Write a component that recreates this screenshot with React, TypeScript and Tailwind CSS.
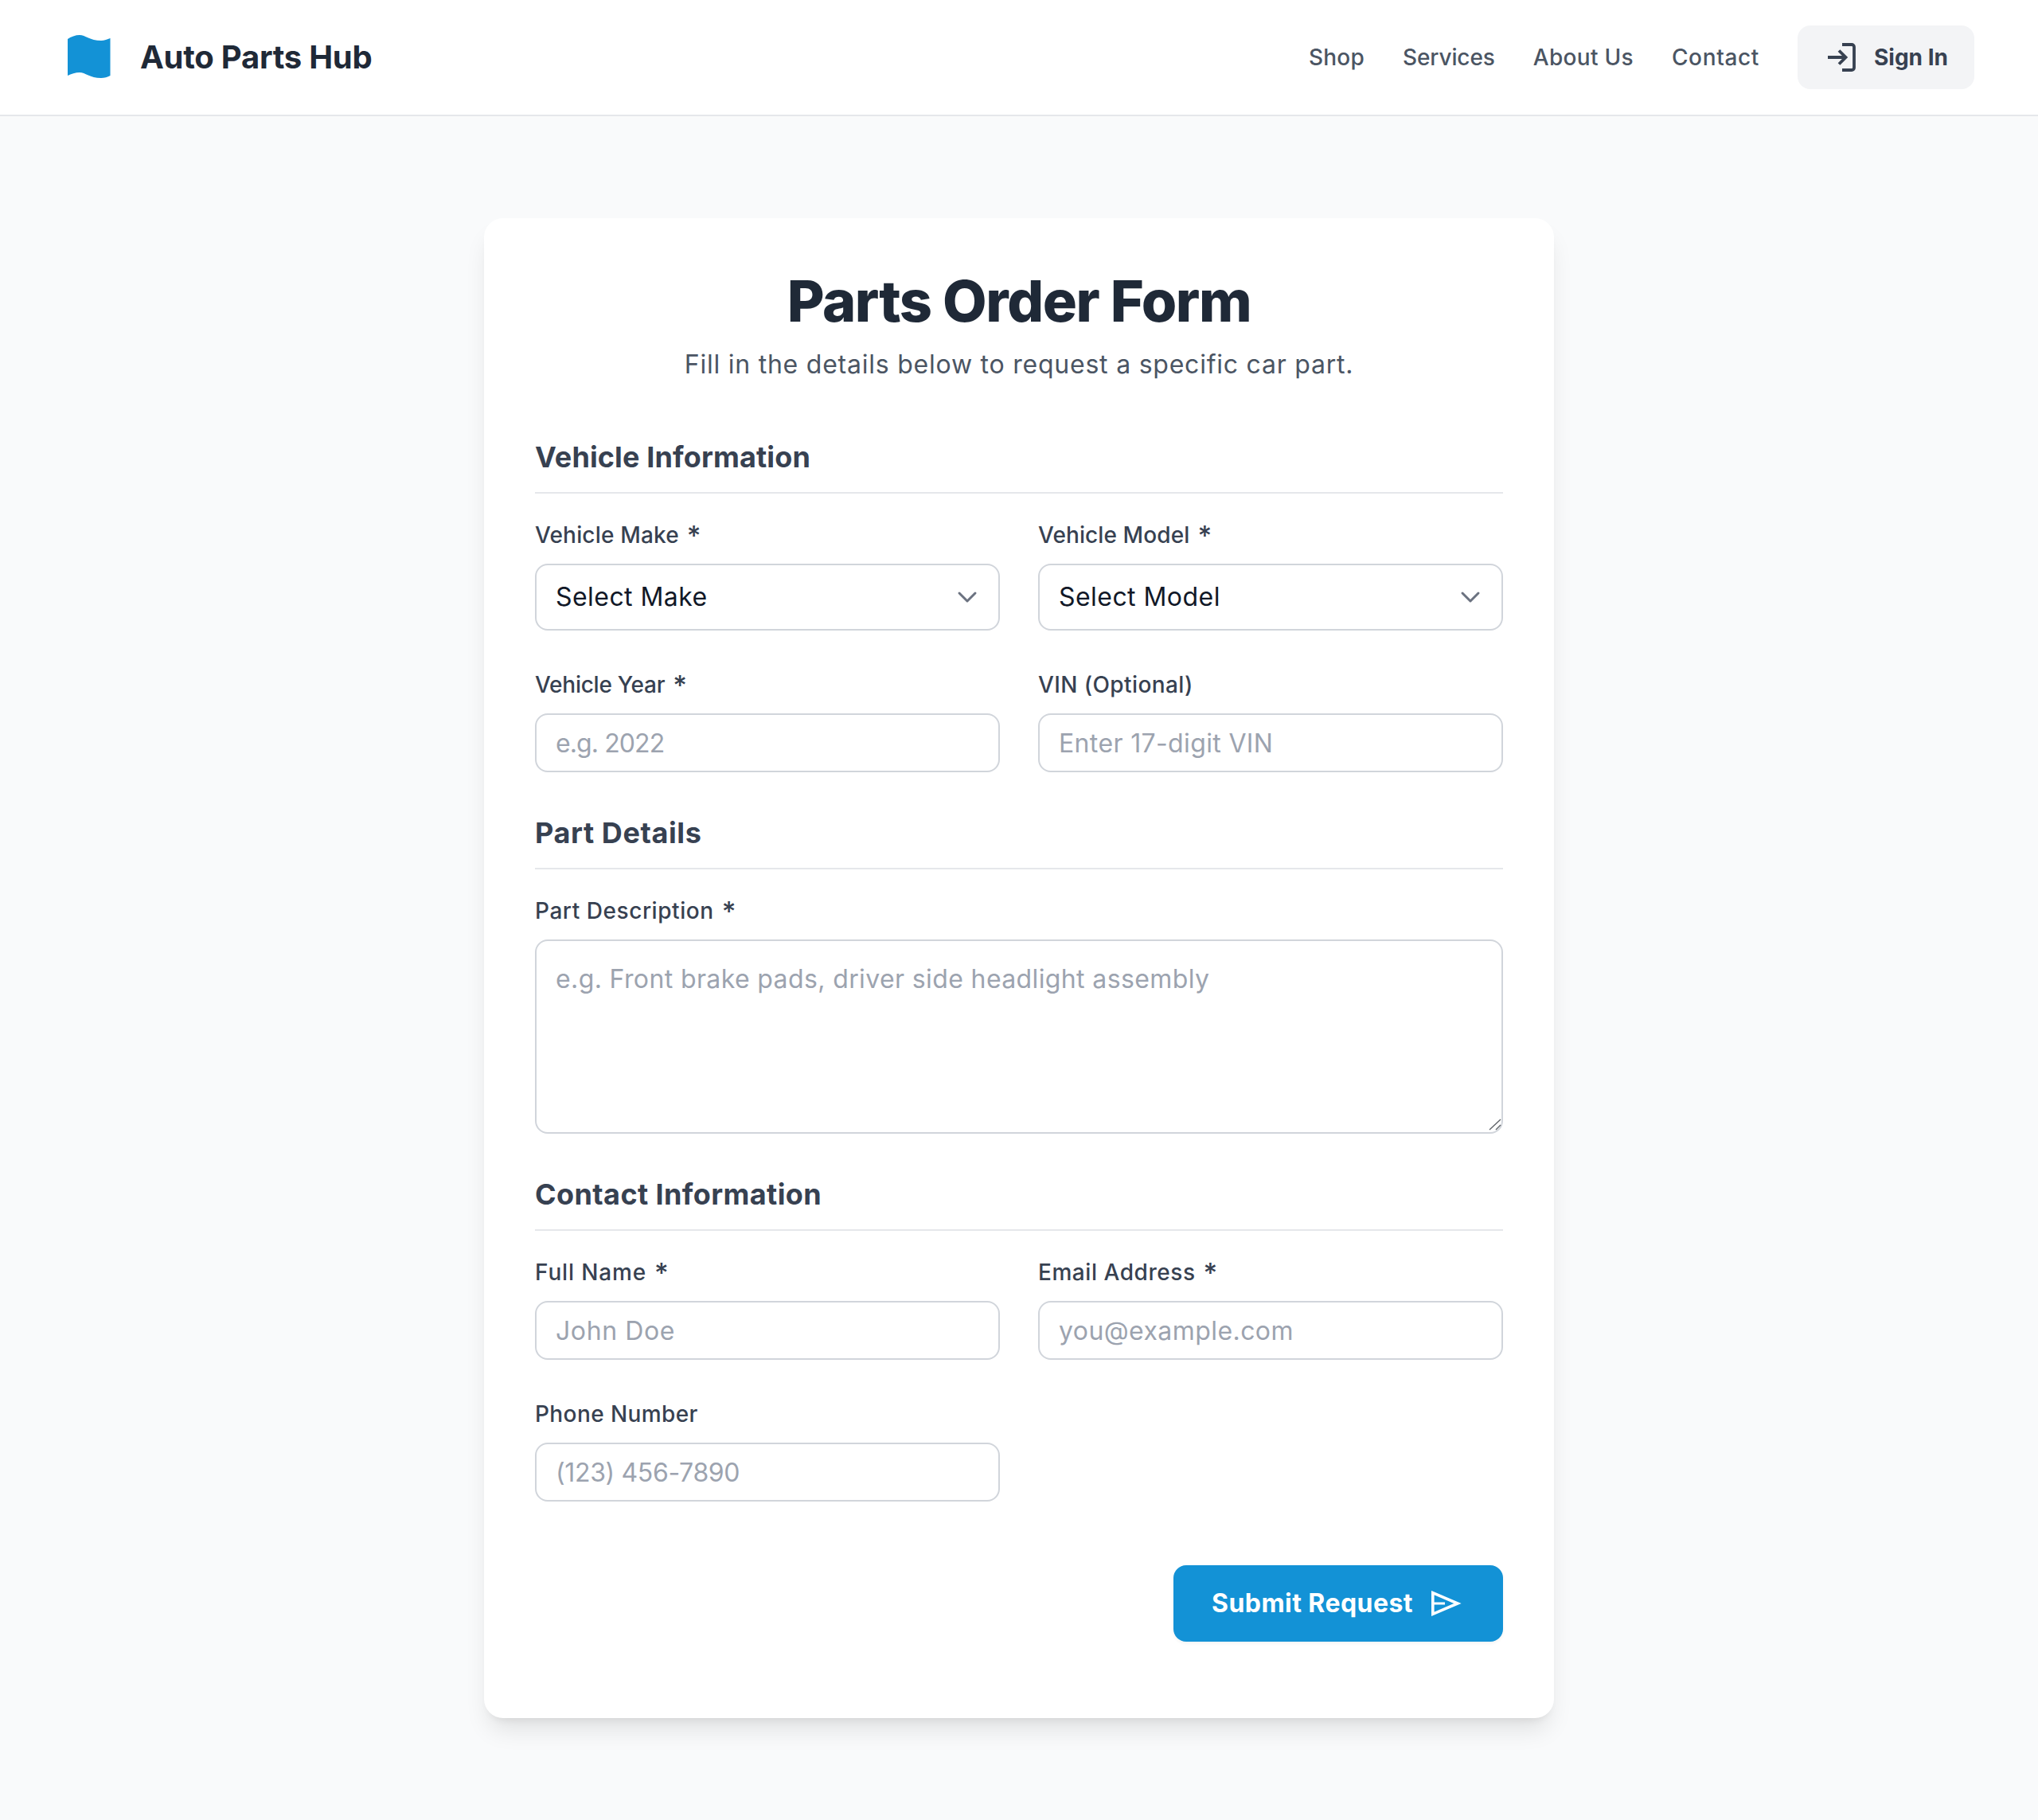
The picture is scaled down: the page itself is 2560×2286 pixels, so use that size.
const font = "font-['Inter','Liberation_Sans',sans-serif]";

function Label({ children, required, className = "" }: { children: React.ReactNode; required?: boolean; className?: string }) {
  return (
    <label className={"block mb-4 h-10 text-[28px] leading-[40px] font-medium text-[#374151] " + className}>
      {children}
      {required && <span className="ml-[10px] text-[34px] leading-none align-[-3px] tracking-normal">*</span>}
    </label>
  );
}

function SectionTitle({ children, className = "" }: { children: React.ReactNode; className?: string }) {
  return (
    <h2 className={"text-[36px] leading-[56px] font-bold text-[#374151] pb-4 border-b-2 border-[#e5e7eb] mb-8 " + className}>
      {children}
    </h2>
  );
}

function TextField({ label, placeholder, required, labelClass, inputClass = "" }: { label: string; placeholder: string; required?: boolean; labelClass?: string; inputClass?: string }) {
  return (
    <div>
      <Label required={required} className={labelClass}>{label}</Label>
      <input
        type="text"
        placeholder={placeholder}
        className={"block w-full h-[74px] px-6 border-2 border-[#d1d5db] rounded-2xl bg-white text-[32px] text-[#111827] placeholder:text-[#9ca3af] outline-none " + inputClass}
      />
    </div>
  );
}

function SelectField({ label, value, labelClass }: { label: string; value: string; labelClass?: string }) {
  return (
    <div>
      <Label required className={labelClass}>{label}</Label>
      <div className="relative">
        <select className="block w-full h-[84px] pl-6 pr-20 border-2 border-[#d1d5db] rounded-2xl bg-white text-[32px] tracking-[0.45px] text-[#111827] appearance-none outline-none">
          <option>{value}</option>
        </select>
        <svg className="absolute right-[21px] top-[22px] w-10 h-10 pointer-events-none" viewBox="0 0 40 40" fill="none" stroke="#6b7280" strokeWidth="3" strokeLinecap="round" strokeLinejoin="round">
          <path d="M10 15l10 10 10-10" />
        </svg>
      </div>
    </div>
  );
}

export default function App() {
  return (
    <div className={"min-h-screen bg-[#f9fafb] " + font}>
      <header className="h-[146px] bg-white border-b-2 border-[#e5e7eb] flex items-center justify-between px-20">
        <div className="flex items-center gap-8">
          <svg className="w-16 h-16 text-[#1392d6]" viewBox="-5 -4 64 64" fill="currentColor">
            <path d="M0 5C4 2 10 0 15 0C22 0 28 7 42 7C46 7 50 5.5 53.5 4L53.5 51C50 52.8 46 54 42 54C28 54 22 47 15 47C10 47 4 49 0 51Z" />
          </svg>
          <span className="text-[40px] leading-[56px] font-bold text-[#1f2937] tracking-[-0.25px]">Auto Parts Hub</span>
        </div>
        <nav className="flex items-center gap-12">
          <a className="text-[28px] leading-[40px] font-medium text-[#4b5563] tracking-[0.2px]">Shop</a>
          <a className="text-[28px] leading-[40px] font-medium text-[#4b5563] tracking-[-0.1px]">Services</a>
          <a className="text-[28px] leading-[40px] font-medium text-[#4b5563] tracking-[0.3px]">About Us</a>
          <a className="text-[28px] leading-[40px] font-medium text-[#4b5563] tracking-[0.65px]">Contact</a>
          <button className="flex items-center gap-[18px] h-20 w-[222px] pl-[38px] rounded-2xl bg-[#f3f4f6] text-[28px] font-bold text-[#374151]">
            <svg className="w-10 h-10" viewBox="0 0 40 40" fill="none" stroke="currentColor" strokeWidth="3.8">
              <path d="M0 20H21M14 11.5L22.5 20L14 28.5M18 4H30a3 3 0 0 1 3 3V33a3 3 0 0 1-3 3H18" />
            </svg>
            Sign In
          </button>
        </nav>
      </header>

      <main className="py-32">
        <div className="mx-auto w-[1344px] bg-white rounded-3xl px-16 pt-16 pb-[96px] shadow-[0_20px_30px_-6px_rgba(0,0,0,0.1),0_8px_12px_-8px_rgba(0,0,0,0.1)]">
          <h1 className="text-center text-[72px] leading-[80px] font-extrabold text-[#1f2937] tracking-[-1.4px]">Parts Order Form</h1>
          <p className="mt-3 text-center text-[32px] leading-[56px] text-[#4b5563] tracking-[0.77px]">Fill in the details below to request a specific car part.</p>

          <SectionTitle className="mt-[60px] tracking-[0.13px]">Vehicle Information</SectionTitle>
          <div className="grid grid-cols-2 gap-x-12 gap-y-12">
            <SelectField label="Vehicle Make" value="Select Make" labelClass="tracking-[0.17px]" />
            <SelectField label="Vehicle Model" value="Select Model" labelClass="tracking-[0.1px]" />
            <TextField label="Vehicle Year" required placeholder="e.g. 2022" labelClass="tracking-[-0.25px]" inputClass="tracking-[-0.9px]" />
            <TextField label="VIN (Optional)" placeholder="Enter 17-digit VIN" labelClass="tracking-[0.4px]" inputClass="tracking-[0.36px]" />
          </div>

          <SectionTitle className="mt-12 tracking-[0.6px]">Part Details</SectionTitle>
          <Label required className="tracking-[0.55px]">Part Description</Label>
          <div className="relative">
            <textarea
              placeholder="e.g. Front brake pads, driver side headlight assembly"
              className="block w-full h-[244px] px-6 py-6 border-2 border-[#d1d5db] rounded-2xl bg-white text-[32px] leading-[48px] tracking-[0.38px] text-[#111827] placeholder:text-[#9ca3af] outline-none resize-none"
            />
            <svg className="absolute right-[2px] bottom-[3px] w-4 h-4 pointer-events-none" viewBox="0 0 16 16" fill="none" stroke="#5f6368" strokeWidth="1.4">
              <path d="M1 14L15 1M9 14l6-6" />
            </svg>
          </div>

          <SectionTitle className="mt-12 tracking-[0.4px]">Contact Information</SectionTitle>
          <div className="grid grid-cols-2 gap-x-12 gap-y-12">
            <TextField label="Full Name" required placeholder="John Doe" labelClass="tracking-[0.85px]" inputClass="tracking-[0.6px]" />
            <TextField label="Email Address" required placeholder="you@example.com" labelClass="tracking-[0.55px]" inputClass="tracking-[0.43px]" />
            <TextField label="Phone Number" placeholder="(123) 456-7890" labelClass="tracking-[0.4px]" inputClass="tracking-[-0.35px]" />
          </div>

          <div className="flex justify-end mt-20">
            <button className="flex items-center gap-[22px] w-[414px] h-24 pl-12 rounded-2xl bg-[#1392d6] text-white text-[32px] font-bold tracking-[0.45px] shadow-[0_2px_4px_rgba(0,0,0,0.05)]">
              Submit Request
              <svg className="w-10 h-10" viewBox="0 0 40 40" fill="none" stroke="currentColor" strokeWidth="3.6">
                <path d="M2.8 6.7L34 20L2.8 33.3Z" />
                <path d="M3 20H18" strokeWidth="3" />
              </svg>
            </button>
          </div>
        </div>
      </main>
    </div>
  );
}
